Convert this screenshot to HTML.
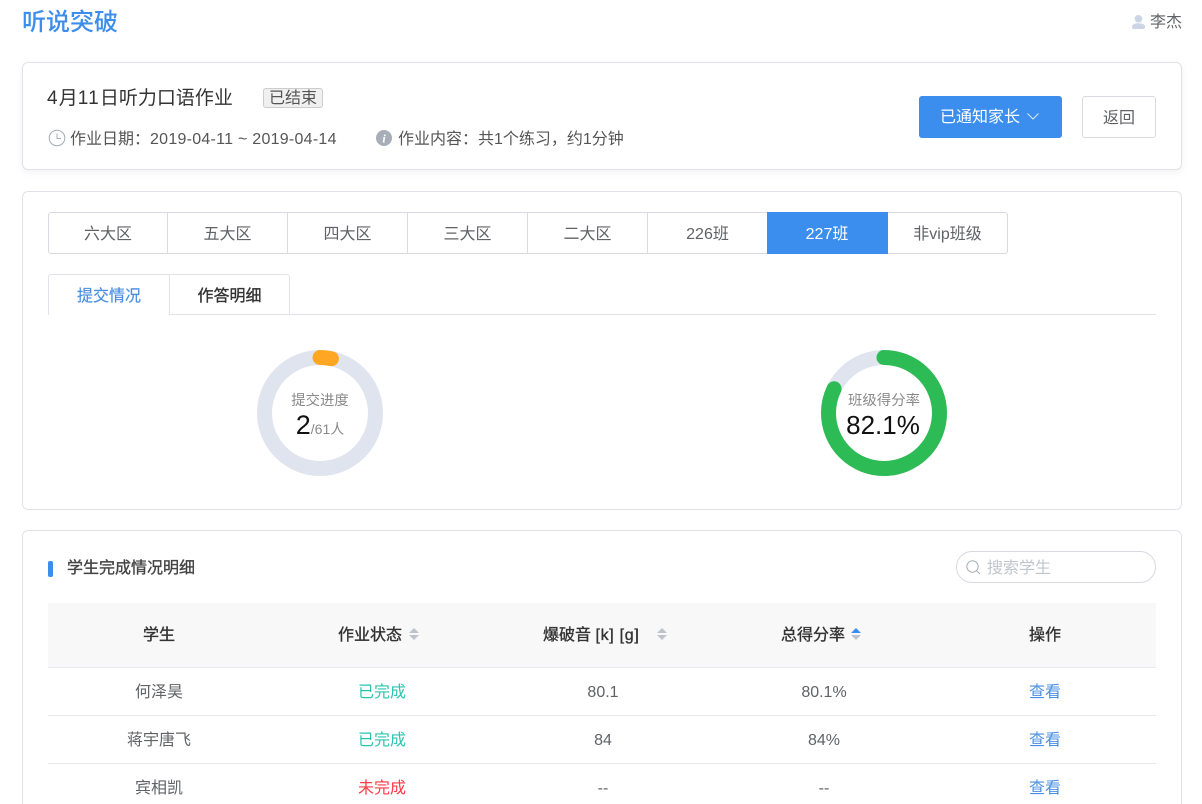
<!DOCTYPE html>
<html lang="zh">
<head>
<meta charset="utf-8">
<style>
*{box-sizing:border-box}
html,body{margin:0;padding:0;width:1202px;height:804px;overflow:hidden;background:#fff}
#page{position:relative;width:1202px;height:804px;overflow:hidden;background:#fff;
font-family:"Liberation Sans","Noto Sans CJK SC",sans-serif;color:#606266}
.a{position:absolute;white-space:nowrap}
.card{position:absolute;left:22px;width:1160px;background:#fff;border:1px solid #e2e2ea;border-radius:6px}
.seg{position:absolute;top:212px;height:42px;line-height:43px;text-align:center;font-size:16px;color:#606266;border:1px solid #d9d9e4;border-left:0;background:#fff}
.th{position:absolute;top:604px;height:64px;line-height:64px;font-size:16px;color:#333;-webkit-text-stroke:.35px #333;text-align:center;white-space:nowrap}
.td{position:absolute;height:20px;line-height:20px;font-size:16px;color:#606266;text-align:center;white-space:nowrap}
.line{position:absolute;left:48px;width:1108px;height:1px;background:#e9e9f0}
.link{color:#4a90e2}
.ok{color:#2cc4b0}
.no{color:#ff3b45}
.sort{position:absolute;width:10px;height:12px}
</style>
</head>
<body>
<div id="page">
<div class="a" style="left:22px;top:7px;font-size:24px;line-height:32px;font-weight:500;color:#3d8eec">听说突破</div>

<svg class="a" style="left:1132px;top:15px" width="13" height="15" viewBox="0 0 13 15"><circle cx="6.500" cy="3.800" r="3.800" fill="#ccd5e5"/><path d="M0 12c0-2.800 2.600-3.800 6.500-3.800S13 9.200 13 12c0 1.400-.6 2-2 2H2c-1.400 0-2-.6-2-2z" fill="#ccd5e5"/></svg>
<div class="a" style="left:1150px;top:13px;font-size:16px;line-height:20px;color:#606266">李杰</div>

<div class="card" style="top:62px;height:108px;box-shadow:0 2px 8px rgba(0,0,0,.06)"></div>
<div class="a" style="left:47px;top:87px;font-size:19px;line-height:24px;color:#333"><span style="letter-spacing:1.200px">4</span>月<span style="letter-spacing:1.200px">11</span>日听力口语作业</div>
<div class="a" style="left:263px;top:88px;width:60px;height:20px;line-height:20px;text-align:center;font-size:16px;color:#555;background:#f0f0f0;border:1px solid #ccc;border-radius:3px">已结束</div>
<svg class="a" style="left:48px;top:129px" width="18" height="18" viewBox="0 0 18 18" fill="none" stroke="#a4abb5"><circle cx="9" cy="9" r="7.800"/><path d="M9 4.500V9.500H13"/></svg>
<div class="a" style="left:70px;top:130px;font-size:16px;line-height:20px;color:#555">作业日期：<span style="letter-spacing:.26px">2019-04-11 ~ 2019-04-14</span></div>
<svg class="a" style="left:376px;top:130px" width="16" height="16" viewBox="0 0 16 16"><circle cx="8" cy="8" r="8" fill="#a7aeb8"/><text x="8" y="12.500" font-family="Liberation Serif,serif" font-style="italic" font-weight="700" font-size="12" fill="#fff" text-anchor="middle">i</text></svg>
<div class="a" style="left:398px;top:130px;font-size:16px;line-height:20px;color:#555">作业内容：共1个练习，约1分钟</div>

<div class="a" style="left:919px;top:96px;width:143px;height:42px;background:#3b8eed;border-radius:3px;color:#fff;font-size:16px;line-height:44px;padding-left:21px">已通知家长</div>
<svg class="a" style="left:1026px;top:112px" width="14" height="9" viewBox="0 0 14 9" fill="none" stroke="#dbe9fb" stroke-width="1"><path d="M1.500 1.500L7 7L12.500 1.500"/></svg>
<div class="a" style="left:1082px;top:96px;width:74px;height:42px;background:#fff;border:1px solid #d9d9e4;border-radius:3px;color:#606266;font-size:16px;line-height:43px;text-align:center">返回</div>

<div class="card" style="top:191px;height:319px"></div>
<div class="seg" style="left:48px;width:120px;border-left:1px solid #d9d9e4;border-radius:3px 0 0 3px">六大区</div>
<div class="seg" style="left:168px;width:120px">五大区</div>
<div class="seg" style="left:288px;width:120px">四大区</div>
<div class="seg" style="left:408px;width:120px">三大区</div>
<div class="seg" style="left:528px;width:120px">二大区</div>
<div class="seg" style="left:648px;width:120px">226班</div>
<div class="seg" style="left:767px;width:121px;background:#3b8eed;border-color:#3b8eed;color:#fff">227班</div>
<div class="seg" style="left:888px;width:120px;border-radius:0 3px 3px 0">非vip班级</div>

<div class="line" style="top:314px;background:#e2e2ea"></div>
<div class="a" style="left:48px;top:274px;width:122px;height:41px;background:#fff;border:1px solid #e2e2ea;border-bottom:0;border-radius:3px 0 0 0;text-align:center;font-size:16px;line-height:43px;color:#4a90e2;-webkit-text-stroke:.2px #4a90e2">提交情况</div>
<div class="a" style="left:169px;top:274px;width:121px;height:41px;border:1px solid #e2e2ea;border-radius:0 3px 0 0;text-align:center;font-size:16px;line-height:43px;color:#333;-webkit-text-stroke:.35px #333">作答明细</div>

<svg class="a" style="left:250px;top:343px" width="140" height="140" viewBox="0 0 140 140" fill="none" stroke-width="15">
<circle cx="70" cy="70" r="55.500" stroke="#e0e4ef"/>
<circle cx="70" cy="70" r="55.500" stroke="#ffa723" stroke-linecap="round" stroke-dasharray="11.500 337.200" transform="rotate(-90 70 70)"/>
</svg>
<div class="a" style="left:257px;width:126px;top:391px;text-align:center;font-size:14.400px;line-height:20px;color:#8a8a8a">提交进度</div>
<div class="a" style="left:257px;width:126px;top:409px;text-align:center;line-height:32px;color:#8a8a8a;font-size:14px"><span style="font-size:27px;color:#111">2</span>/61人</div>

<svg class="a" style="left:814px;top:343px" width="140" height="140" viewBox="0 0 140 140" fill="none" stroke-width="15">
<circle cx="70" cy="70" r="55.500" stroke="#e0e4ef"/>
<circle cx="70" cy="70" r="55.500" stroke="#2dbb55" stroke-linecap="round" stroke-dasharray="286.300 62.400" transform="rotate(-90 70 70)"/>
</svg>
<div class="a" style="left:821px;width:126px;top:391px;text-align:center;font-size:14.400px;line-height:20px;color:#8a8a8a">班级得分率</div>
<div class="a" style="left:821px;width:124px;top:409px;text-align:center;font-size:26px;line-height:32px;color:#111">82.1%</div>

<div class="card" style="top:530px;height:290px"></div>
<div class="a" style="left:48px;top:561px;width:5px;height:16px;background:#3b8eed;border-radius:2px"></div>
<div class="a" style="left:67px;top:559px;font-size:16px;line-height:20px;color:#444;-webkit-text-stroke:.35px #444">学生完成情况明细</div>
<div class="a" style="left:956px;top:551px;width:200px;height:32px;border:1px solid #d9d9e4;border-radius:16px"></div>
<svg class="a" style="left:965px;top:559px" width="17" height="17" viewBox="0 0 17 17" fill="none" stroke="#a9afb8" stroke-width="1"><circle cx="7.500" cy="7.500" r="5.700"/><path d="M11.700 11.700L15 15"/></svg>
<div class="a" style="left:987px;top:559px;font-size:16px;line-height:20px;color:#c0c4cc">搜索学生</div>

<div class="a" style="left:48px;top:603px;width:1108px;height:64px;background:#f8f8f9"></div>
<div class="line" style="top:667px"></div>
<div class="th" style="left:48px;width:222px">学生</div>
<div class="th" style="left:338px">作业状态</div>
<div class="th" style="left:543px">爆破音 <span style="letter-spacing:.7px">[k] [g]</span></div>
<div class="th" style="left:781px">总得分率</div>
<div class="th" style="left:934px;width:222px">操作</div>
<svg class="sort" style="left:409px;top:628px" viewBox="0 0 10 12"><path d="M5 0L10 5H0z" fill="#bfc2cc"/><path d="M5 12L10 7H0z" fill="#bfc2cc"/></svg>
<svg class="sort" style="left:657px;top:628px" viewBox="0 0 10 12"><path d="M5 0L10 5H0z" fill="#bfc2cc"/><path d="M5 12L10 7H0z" fill="#bfc2cc"/></svg>
<svg class="sort" style="left:851px;top:628px" viewBox="0 0 10 12"><path d="M5 0L10 5H0z" fill="#3b8eed"/><path d="M5 12L10 7H0z" fill="#bfc2cc"/></svg>

<div class="td" style="left:48px;width:222px;top:683px">何泽昊</div>
<div class="td ok" style="left:271px;width:222px;top:683px">已完成</div>
<div class="td" style="left:492px;width:222px;top:683px">80.1</div>
<div class="td" style="left:713px;width:222px;top:683px">80.1%</div>
<div class="td link" style="left:934px;width:222px;top:683px">查看</div>
<div class="line" style="top:715px"></div>

<div class="td" style="left:48px;width:222px;top:731px">蒋宇唐飞</div>
<div class="td ok" style="left:271px;width:222px;top:731px">已完成</div>
<div class="td" style="left:492px;width:222px;top:731px">84</div>
<div class="td" style="left:713px;width:222px;top:731px">84%</div>
<div class="td link" style="left:934px;width:222px;top:731px">查看</div>
<div class="line" style="top:763px"></div>

<div class="td" style="left:48px;width:222px;top:779px">宾相凯</div>
<div class="td no" style="left:271px;width:222px;top:779px">未完成</div>
<div class="td" style="left:492px;width:222px;top:779px">--</div>
<div class="td" style="left:713px;width:222px;top:779px">--</div>
<div class="td link" style="left:934px;width:222px;top:779px">查看</div>
</div>
</body>
</html>
